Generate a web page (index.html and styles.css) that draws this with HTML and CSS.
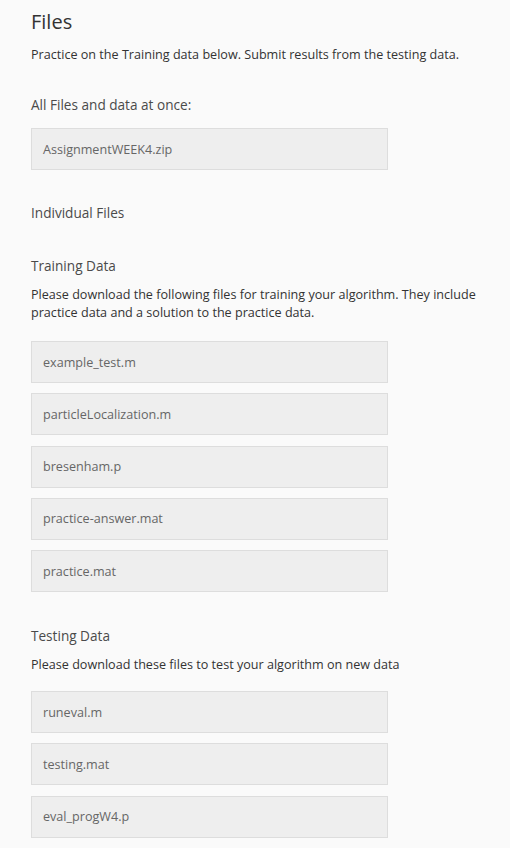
FILE: index.html
```html
<!DOCTYPE html>
<html>
<head>
<meta charset="utf-8">
<link rel="stylesheet" href="styles.css">
</head>
<body>
<main class="page">
  <h1 class="title">Files</h1>
  <p class="text">Practice on the Training data below. Submit results from the testing data.</p>
  <h3 class="label label-all">All Files and data at once:</h3>
  <div class="file file-all">AssignmentWEEK4.zip</div>
  <h3 class="label label-ind">Individual Files</h3>
  <h3 class="label label-sec">Training Data</h3>
  <p class="text">Please download the following files for training your algorithm. They include practice data and a solution to the practice data.</p>
  <div class="files">
    <div class="file">example_test.m</div>
    <div class="file">particleLocalization.m</div>
    <div class="file">bresenham.p</div>
    <div class="file">practice-answer.mat</div>
    <div class="file">practice.mat</div>
  </div>
  <h3 class="label label-test">Testing Data</h3>
  <p class="text">Please download these files to test your algorithm on new data</p>
  <div class="files files-test">
    <div class="file">runeval.m</div>
    <div class="file">testing.mat</div>
    <div class="file">eval_progW4.p</div>
  </div>
</main>
</body>
</html>
```

FILE: styles.css
```css
html, body {
  margin: 0;
  padding: 0;
  background: #fafafa;
}
.page {
  padding: 8px 31px 0 31px;
  font-family: "Open Sans", sans-serif;
  color: #333;
  width: 450px;
}
.title {
  margin: 0;
  font-size: 20px;
  font-weight: 400;
  line-height: 28px;
  color: #333;
}
.text {
  margin: 10px 0 0 0;
  font-size: 12.6px;
  line-height: 18px;
  color: #333;
}
.label {
  margin: 0;
  font-size: 13.6px;
  font-weight: 400;
  line-height: 20px;
  color: #4a4a4a;
}
.label-all { margin-top: 31px; }
.label-ind { margin-top: 33px; }
.label-sec { margin-top: 33px; }
.label-test { margin-top: 34px; }
.file {
  box-sizing: border-box;
  width: 357px;
  height: 42px;
  padding: 0 11px;
  display: flex;
  align-items: center;
  background: #eeeeee;
  border: 1px solid #dddddd;
  font-size: 12.6px;
  color: #666;
}
.file-all { margin-top: 13px; }
.files {
  display: flex;
  flex-direction: column;
  gap: 10.3px;
  margin-top: 19px;
}
.files-test { margin-top: 17px; }
```
